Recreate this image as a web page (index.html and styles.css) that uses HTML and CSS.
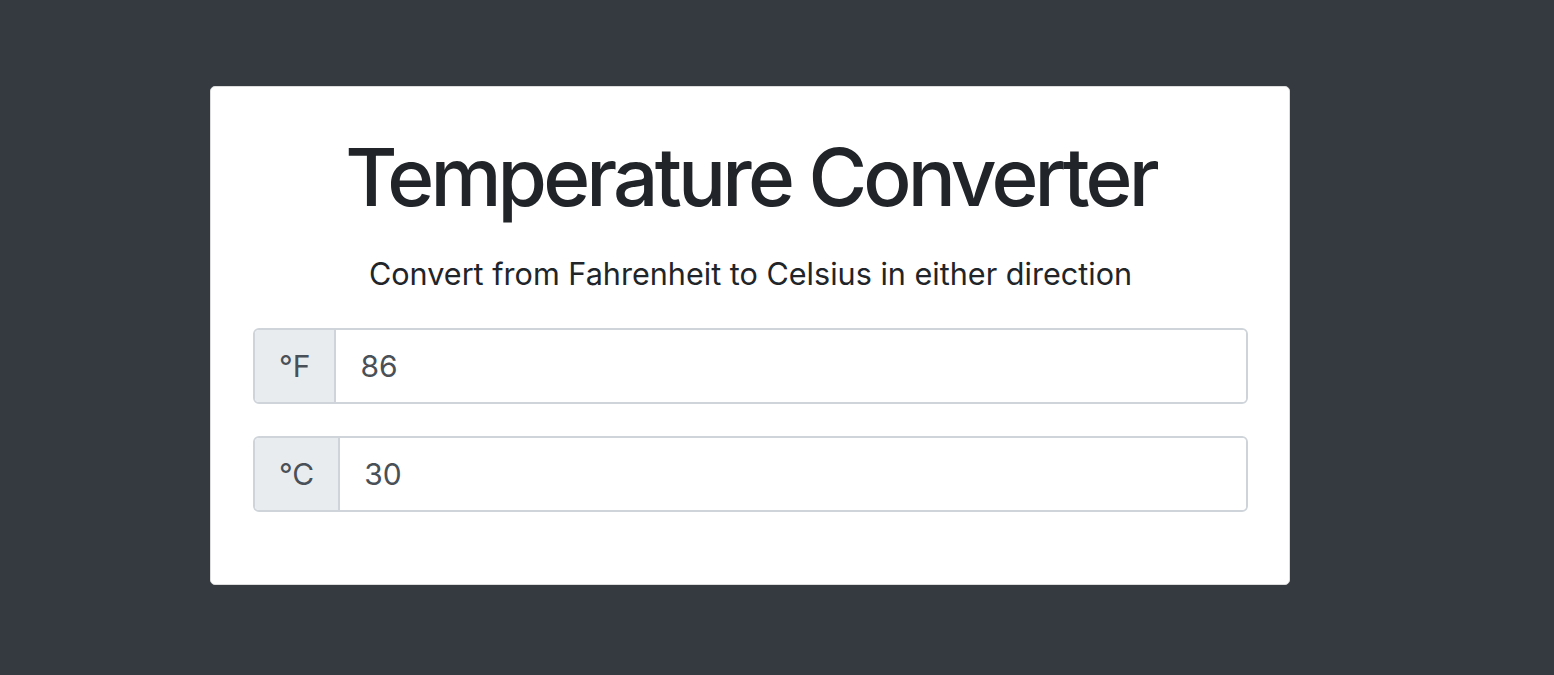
FILE: index.html
```html
<!DOCTYPE html>
<html>
<head>
<meta charset="utf-8">
<link rel="stylesheet" href="styles.css">
</head>
<body>
<div class="page">
  <div class="card">
    <h1 class="title">Temperature Converter</h1>
    <p class="lead">Convert from Fahrenheit to Celsius in either direction</p>
    <div class="input-group">
      <span class="addon">°F</span>
      <input class="field" type="text" value="86">
    </div>
    <div class="input-group">
      <span class="addon">°C</span>
      <input class="field" type="text" value="30">
    </div>
  </div>
</div>
</body>
</html>
```
FILE: styles.css
```css
html, body {
  margin: 0;
  padding: 0;
  background: #343a40;
  font-family: Inter, "Noto Sans", sans-serif;
}
.page {
  padding: 86px 0 0 210px;
}
.card {
  box-sizing: border-box;
  width: 1080px;
  height: 499px;
  background: #fff;
  border: 1px solid #dcdcdc;
  border-radius: 5px;
  padding: 42px 41px 0 42px;
  color: #212529;
}
.title {
  margin: 0;
  text-align: center;
  font-size: 80px;
  font-weight: 500;
  letter-spacing: -3.85px;
  line-height: 96px;
}
.lead {
  margin: 26px 0 0 0;
  text-align: center;
  font-size: 30.6px;
  line-height: 45px;
}
.input-group {
  display: flex;
  height: 76px;
  box-sizing: border-box;
  border: 2px solid #ced4da;
  border-radius: 6px;
  overflow: hidden;
  margin-top: 32px;
}
.lead + .input-group {
  margin-top: 32px;
}
.addon {
  display: flex;
  align-items: center;
  padding: 0 24px;
  background: #e9ecef;
  border-right: 2px solid #ced4da;
  color: #495057;
  font-size: 30px;
}
.field {
  flex: 1;
  border: 0;
  outline: none;
  padding: 0 24px;
  font-family: inherit;
  font-size: 30px;
  color: #495057;
  background: #fff;
}
```
